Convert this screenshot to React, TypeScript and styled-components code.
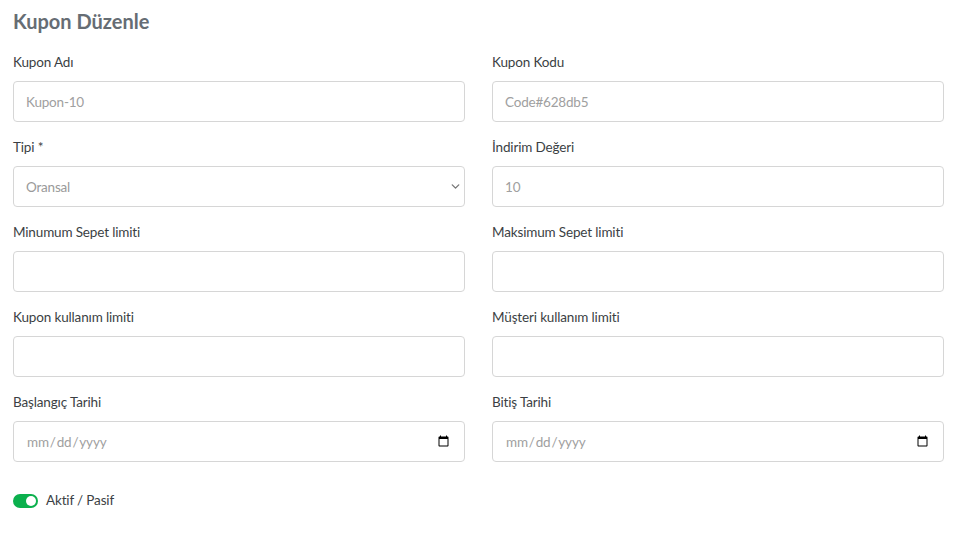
import { useState } from "react";
import styled, { createGlobalStyle } from "styled-components";
import { ChevronDown } from "lucide-react";

const GlobalStyle = createGlobalStyle`
  body {
    margin: 0;
    background: #fff;
    font-family: "Nunito", Lato, "Noto Sans", sans-serif;
  }
`;

const Page = styled.div`
  padding: 9px 16px 20px 13px;
`;

const Title = styled.h2`
  margin: 0 0 20px;
  font-family: Lato, "Liberation Sans", sans-serif;
  font-size: 20px;
  line-height: 24px;
  font-weight: 700;
  color: #666d74;
`;

const Grid = styled.div`
  display: grid;
  grid-template-columns: 452px 452px;
  column-gap: 27px;
  row-gap: 16px;
`;

const Field = styled.div`
  display: flex;
  flex-direction: column;
`;

const Label = styled.label`
  font-family: Lato, sans-serif;
  font-size: 13.5px;
  letter-spacing: -0.15px;
  line-height: 19px;
  color: #3b3f44;
  margin-bottom: 9px;
`;

const Input = styled.input`
  box-sizing: border-box;
  height: 41px;
  width: 100%;
  padding: 0 12px;
  border: 1px solid #d6d6d6;
  border-radius: 4px;
  font-family: Lato, sans-serif;
  font-size: 13.5px;
  letter-spacing: -0.2px;
  color: #9a9a9a;
  background: #fff;
  outline: none;

  &::placeholder {
    color: #a0a0a0;
  }

  &::-webkit-datetime-edit {
    color: #a0a0a0;
  }
`;

const SelectWrap = styled.div`
  position: relative;
`;

const Select = styled.select`
  box-sizing: border-box;
  appearance: none;
  height: 41px;
  width: 100%;
  padding: 0 12px;
  border: 1px solid #d6d6d6;
  border-radius: 4px;
  font-family: Lato, sans-serif;
  font-size: 13.5px;
  letter-spacing: -0.2px;
  color: #9a9a9a;
  background: #fff;
  outline: none;
`;

const Chevron = styled(ChevronDown)`
  position: absolute;
  right: 3px;
  top: 14px;
  color: #777;
  pointer-events: none;
`;

const ToggleRow = styled.label`
  display: flex;
  align-items: center;
  gap: 8px;
  margin-top: 29px;
  font-family: Lato, sans-serif;
  font-size: 13.5px;
  letter-spacing: -0.15px;
  line-height: 19px;
  color: #3b3f44;
  cursor: pointer;
`;

const Track = styled.span<{ $on: boolean }>`
  position: relative;
  display: inline-block;
  width: 25px;
  height: 14px;
  border-radius: 7px;
  background: ${p => (p.$on ? "#0bb04d" : "#ccc")};
`;

const Knob = styled.span<{ $on: boolean }>`
  position: absolute;
  top: 2px;
  left: ${p => (p.$on ? "13px" : "2px")};
  width: 10px;
  height: 10px;
  border-radius: 50%;
  background: #fff;
`;

export default function App() {
  const [active, setActive] = useState(true);

  return (
    <Page>
      <GlobalStyle />
      <Title>Kupon Düzenle</Title>
      <Grid>
        <Field>
          <Label>Kupon Adı</Label>
          <Input placeholder="Kupon-10" />
        </Field>
        <Field>
          <Label>Kupon Kodu</Label>
          <Input placeholder="Code#628db5" />
        </Field>
        <Field>
          <Label>Tipi *</Label>
          <SelectWrap>
            <Select defaultValue="oransal">
              <option value="oransal">Oransal</option>
              <option value="sabit">Sabit</option>
            </Select>
            <Chevron size={13} strokeWidth={2.5} />
          </SelectWrap>
        </Field>
        <Field>
          <Label>İndirim Değeri</Label>
          <Input placeholder="10" />
        </Field>
        <Field>
          <Label>Minumum Sepet limiti</Label>
          <Input />
        </Field>
        <Field>
          <Label>Maksimum Sepet limiti</Label>
          <Input />
        </Field>
        <Field>
          <Label>Kupon kullanım limiti</Label>
          <Input />
        </Field>
        <Field>
          <Label>Müşteri kullanım limiti</Label>
          <Input />
        </Field>
        <Field>
          <Label>Başlangıç Tarihi</Label>
          <Input type="date" />
        </Field>
        <Field>
          <Label>Bitiş Tarihi</Label>
          <Input type="date" />
        </Field>
      </Grid>
      <ToggleRow onClick={() => setActive(!active)}>
        <Track $on={active}>
          <Knob $on={active} />
        </Track>
        Aktif / Pasif
      </ToggleRow>
    </Page>
  );
}
